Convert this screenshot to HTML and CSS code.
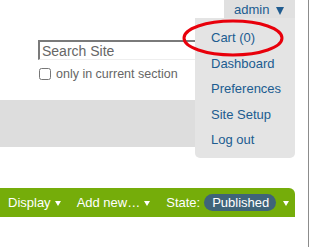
FILE: index.html
```html
<!DOCTYPE html>
<html>
<head>
    <title>Site</title>
    <link rel="stylesheet" href="styles.css">
</head>
<body>
    <div class="page">
        <div class="portal-top">
            <div class="user-bar">
                <a class="user-tab" href="#">admin
                    <svg class="caret" width="8" height="8" viewBox="0 0 8 8"><polygon points="0,0 8,0 4,8" /></svg>
                </a>
            </div>
            <form class="search">
                <input class="search-field" type="text" placeholder="Search Site">
                <label class="search-section">
                    <input type="checkbox">
                    <span>only in current section</span>
                </label>
            </form>
        </div>
        <div class="nav-band"></div>
        <div class="toolbar">
            <span class="tool">Display <svg class="arrow" width="6" height="5" viewBox="0 0 6 5"><polygon points="0,0 6,0 3,5" /></svg></span>
            <span class="tool">Add new&hellip; <svg class="arrow" width="6" height="5" viewBox="0 0 6 5"><polygon points="0,0 6,0 3,5" /></svg></span>
            <span class="tool">State: <span class="state">Published</span> <svg class="arrow" width="6" height="5" viewBox="0 0 6 5"><polygon points="0,0 6,0 3,5" /></svg></span>
        </div>

        <ul class="user-menu">
            <li><a href="#">Cart (0)</a></li>
            <li><a href="#">Dashboard</a></li>
            <li><a href="#">Preferences</a></li>
            <li><a href="#">Site Setup</a></li>
            <li><a href="#">Log out</a></li>
        </ul>
        <svg class="marker" width="104" height="40" viewBox="0 0 104 40">
            <ellipse cx="51" cy="20" rx="49" ry="17" />
        </svg>
    </div>
</body>
</html>
```

FILE: styles.css
```css
body {
    margin: 0;
    font-family: "Liberation Sans", Arial, sans-serif;
    font-size: 13px;
    background: #fff;
}
.page {
    position: relative;
    width: 308px;
    height: 247px;
    border-right: 1px solid #8c8c8c;
    overflow: hidden;
}
.portal-top {
    width: 295px;
    height: 100px;
}
.user-bar {
    display: flex;
    justify-content: flex-end;
    height: 18px;
}
.user-tab {
    display: flex;
    align-items: flex-start;
    gap: 7px;
    width: 71px;
    box-sizing: border-box;
    padding: 2px 0 0 10px;
    line-height: 16px;
    background: #e0e0e0;
    color: #205c90;
    text-decoration: none;
}
.caret {
    margin-top: 5px;
    fill: #205c90;
}
.search {
    display: flex;
    flex-direction: column;
    padding: 22px 0 0 38px;
}
.search-field {
    width: 220px;
    height: 20px;
    box-sizing: border-box;
    margin: 0;
    padding: 0 2px;
    border-top: 2px solid #7a7a7a;
    border-left: 2px solid #7a7a7a;
    border-right: 1px solid #eee;
    border-bottom: 1px solid #eee;
    font-family: "Liberation Sans", Arial, sans-serif;
    font-size: 14px;
}
.search-field::placeholder {
    color: #666;
}
.search-section {
    display: flex;
    align-items: center;
    gap: 5px;
    margin-top: 7px;
    color: #666;
    font-size: 12.5px;
}
.search-section input {
    width: 12px;
    height: 12px;
    margin: 0 0 0 1px;
}
.nav-band {
    width: 295px;
    height: 47px;
    margin-bottom: 41px;
    background: #dddddd;
}
.toolbar {
    display: flex;
    align-items: center;
    width: 295px;
    height: 29px;
    box-sizing: border-box;
    padding-left: 8px;
    gap: 16px;
    background: #75ad0a;
    border-top-right-radius: 6px;
    color: #fff;
    line-height: 29px;
}
.tool {
    display: flex;
    align-items: center;
    gap: 4px;
    white-space: nowrap;
}
.arrow {
    fill: #fff;
    margin-top: 2px;
}
.state {
    display: inline-block;
    height: 17px;
    line-height: 17px;
    padding: 0 7px 0 8px;
    border-radius: 9px;
    background: #3f6479;
    margin-right: 3px;
}
.user-menu {
    position: absolute;
    top: 18px;
    left: 195px;
    width: 100px;
    box-sizing: border-box;
    margin: 0;
    padding: 7px 0 5px 16px;
    list-style: none;
    background: #e4e4e4;
    border-radius: 0 0 5px 5px;
}
.user-menu li {
    height: 25.5px;
    line-height: 25.5px;
}
.user-menu a {
    color: #205c90;
    text-decoration: none;
}
.marker {
    position: absolute;
    top: 18px;
    left: 182px;
}
.marker ellipse {
    fill: none;
    stroke: #e8000b;
    stroke-width: 3;
}
```
